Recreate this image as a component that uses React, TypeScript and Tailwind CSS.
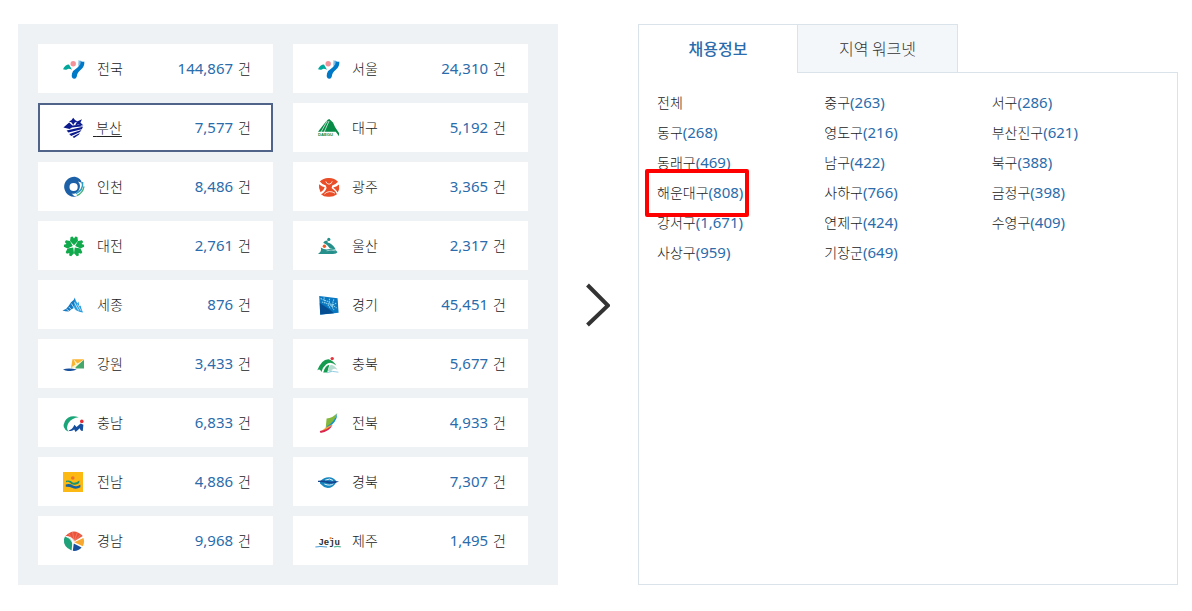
import { useState } from 'react';
import type { ReactNode } from 'react';
import clsx from 'clsx';

type Region = { name: string; count: string; mark: ReactNode };

const seoul = (
  <>
    <path d="M3 14.2Q5 9.4 9 9.4L12 14.8Q8.5 12.9 7 14.4Q5 15 3 14.2Z" fill="#00a89c" />
    <circle cx="13.2" cy="8.8" r="2.7" fill="#f4929a" />
    <path d="M20.2 5.5Q22 7.4 24.3 6.6Q24.8 11.6 20.8 14.8Q17.2 17.4 16.8 21.5Q16.2 24 14 23.8Q11 23 12 18.4Q12.8 15.6 16.3 13.6Q20.4 11 20.2 5.5Z" fill="#0078c8" />
    <path d="M18.6 5L20.8 6.4L20.2 9.6L18.2 11Z" fill="#7db9e4" />
  </>
);
const busan = (
  <g fill="#0b1a8e">
    <path d="M13.2 3.8L15 6L17.6 7.4L14.8 8.6L13.2 11L11.6 8.6L9 7.4L11.4 6.2Z" />
    <path d="M17 7.6L22 5.2L20.4 8.4L23.4 11.4L18 10.4L15 11.8Z" />
    <path d="M3.4 13.4L9.2 8.6L12.4 11.6L20 10.8L22.8 12.2L12 13.6L9.5 15Z" />
    <path d="M6.6 16.6L23 12.8L21.8 15.2L8.4 18.6Z" />
    <path d="M9.2 20L21.4 16L20 18L11.2 22Z" />
    <path d="M12.6 22.8L19.8 19L18.8 20.8L14 24Z" />
  </g>
);
const incheon = (
  <>
    <path d="M15 3.8A10 10 0 1 0 18 23Q14 24 11.6 20.4A6.4 6.4 0 0 0 19.4 16Q21 11 18 8.4Q21 8.6 22 11Q21.5 5 15 3.8Z" fill="#1c60a8" />
    <circle cx="13.6" cy="14" r="4.1" fill="#fff" />
    <path d="M22.6 9Q23.4 17.4 15.8 20.6" fill="none" stroke="#2d9fc5" strokeWidth="1.5" />
    <path d="M24 13.4Q23 20 16.8 22.6" fill="none" stroke="#48ae79" strokeWidth="1.3" />
  </>
);
const daejeon = (
  <g fill="#10a94c">
    {[0, 72, 144, 216, 288].map((angle) => (
      <g key={angle} transform={`rotate(${angle} 14 14.5)`}>
        <path d="M14 13.2L10 9L10.6 5L12.6 4.4L14 6.6L15.4 4.4L17.4 5L18 9Z" />
      </g>
    ))}
  </g>
);
const sejong = (
  <>
    <path d="M2.5 19.6Q6.4 18.4 8.4 15.2L11 11.2Q13.8 9.8 15 6.4Q16 12.6 13.6 17L8.5 20.6Q5.2 20.6 2.5 19.6Z" fill="#1478c2" />
    <path d="M14.8 7.8L17.4 12.6L18.4 10.6L19.4 15.2L20.6 14.4Q21.4 18.4 23 21.4Q17 20.4 13.8 17.4Z" fill="#259be0" />
    <path d="M8.8 16L12.2 19.4M11.4 12.6L15.2 18.8M14.4 11.4L18.8 19.6M17.4 13.4L21 19.8M6.4 18L9 20" stroke="#fff" strokeWidth=".7" />
  </>
);
const gangwon = (
  <>
    <path d="M12.4 9.2H24L20 13.2L11 18.4Z" fill="#fbb332" />
    <path d="M24 9.8V18.4H15.6L15.2 16.6Z" fill="#45a86a" />
    <path d="M13.6 9.2L17.4 13.4L24 9.4L14.8 18L11 17.6L15.6 14.4Z" fill="#fff6cf" />
    <path d="M3 19.4Q9 17.6 16.8 19.6Q13 21.6 8 20.9Q5.4 20.6 3 19.4Z" fill="#174f9c" />
  </>
);
const chungnam = (
  <>
    <path d="M18.8 8.2Q9 5.2 5 12Q1 19.6 8.6 22.8Q5.6 18.8 8.6 13.8Q12 8.8 18.8 8.2Z" fill="#19a577" />
    <path d="M8.4 21.4Q12.4 20.8 14.4 15.8L16.6 18L20.6 14.6L23.4 15.8L22.8 21.8Q20.4 22.8 19.8 19.2L15.6 23L14.2 20.6Q11.6 23 8.4 21.4Z" fill="#164fa0" />
    <circle cx="21.8" cy="12.4" r="1.8" fill="#e62c35" />
  </>
);
const jeonnam = (
  <>
    <path d="M3 4H23V24H3Z" fill="#fcb913" />
    <circle cx="12.8" cy="10" r="1.8" fill="#ee7131" />
    <path d="M6 12.7Q10.6 11.6 12.6 14.4Q15 15.8 19.4 12.5Q20 16 16 16.6Q12 17.4 10 14.8Q8 13.2 6 14.2Z" fill="#1b936b" />
    <path d="M5.8 16.6Q9.5 15.2 13 17.4Q16.6 19.2 20.4 16.8V19.2Q16.6 21.8 12 19.8Q9 18.4 5.8 18.8Z" fill="#1762a2" />
  </>
);
const gyeongnam = (
  <>
    <path d="M5.5 9Q14 0 22.8 9L14.8 14Q11 8.8 5.5 9Z" fill="#ea543d" />
    <path d="M14.2 14.4L8 5.8M14.2 14.4L12.5 4.6M14.2 14.4L17.5 4.8M14.2 14.4L21.4 7" stroke="#f7b09e" strokeWidth=".4" />
    <path d="M5 9.5Q12 10.8 12.3 16.2L11.6 23.6Q3 19.8 4 12Z" fill="#1fa179" />
    <path d="M6 9.5Q12 12 13 17.8" stroke="#fff" fill="none" strokeWidth=".8" />
    <path d="M14.2 15.3L23.4 11Q25 15 22.8 19.2Z" fill="#f7a831" />
    <path d="M13.8 16.5L21.6 20.5Q18 24.5 12.8 23.8Z" fill="#16509d" />
  </>
);
const daegu = (
  <>
    <path d="M3 17.8L11 7.4L12.8 5.8L14.2 5L18 8.4L20 13L24 19V22.2L20.8 17.8Z" fill="#078b46" />
    <path d="M6 18L12.2 7M9.2 18L14 7" stroke="#fff" strokeWidth=".7" fill="none" />
    <text x="3" y="22" fontFamily="Liberation Sans" fontSize="4.2" fontWeight="700" fill="#078b46">DAEGU</text>
  </>
);
const gwangju = (
  <>
    <path d="M4.8 8.6Q8.4 4.8 13.6 5Q19.6 4.8 23 8.8Q21 11.4 17.2 12.4L16.6 15Q20.6 17.6 22 21.2Q18 24 13.8 23.7Q9 24 6 21.2Q10 19.4 11.6 15L10.8 12.6Q7 11.6 4.8 8.6Z" fill="#e94e28" />
    <path d="M4 11.2Q6.8 13.6 9.8 14.2Q9 17.2 5.6 19.2Q3.4 15.2 4 11.2ZM24 11.4Q21.4 13.8 18.2 14.4Q20.8 16.4 22.8 19.4Q25 15.6 24 11.4Z" fill="#e94e28" />
    <path d="M10.8 8.4Q11.4 11 14 11.2Q16.6 11 17.2 8.4" stroke="#fff" strokeWidth=".8" fill="none" />
    <path d="M9.4 21Q14 16.6 20 20.2" stroke="#fff" strokeWidth=".8" fill="none" />
  </>
);
const ulsan = (
  <>
    <circle cx="13.8" cy="7.4" r="1.6" fill="#25908b" />
    <path d="M8.2 10.8Q9.6 8.2 12.6 8.4L12.6 10.4Q17.4 11.4 20.8 17.4L15 16.4Q11.6 12 8.2 10.8Z" fill="#25908b" />
    <path d="M5.8 15.6Q10 18.4 14.8 17Q20 16.4 22.5 20.2Q21.6 21.8 18 21.9H3Q7 19.8 5.8 15.6Z" fill="#25908b" />
    <path d="M11.6 18.8Q16 17.4 20.4 18.8" stroke="#fff" strokeWidth=".5" fill="none" />
    <circle cx="9.4" cy="14.3" r="1.7" fill="#f15a24" />
  </>
);
const gyeonggi = (
  <>
    <path d="M4.2 4.9L22.6 7.2L23.6 21.7L5.2 23.7Z" fill="#0a78c0" />
    <path d="M4.8 12L14 18L19 22.2L5.2 23.6Z" fill="#064e92" />
    <path d="M5.6 7.6L14 11L19 19M9 6.4L10 12L17 13.5L21.5 17M14.5 7.8L14 13L18 15.8M18.8 8.4L17.2 14L21.8 12M7 11L12 12.6L15.5 17.4" fill="none" stroke="#8bd1ed" strokeWidth="1.1" strokeDasharray="1.4 .8" />
  </>
);
const chungbuk = (
  <>
    <path d="M2.2 20.6Q6.8 8.8 13.6 9.2Q17.5 10 21.4 15.4Q15.4 10.6 11 14.4Q7.8 17 6.4 22Q4.8 18 2.2 20.6Z" fill="#159b50" />
    <path d="M8.2 22.4Q10.2 15.4 14.4 14.8L12.2 22.6Z" fill="#159b50" />
    <path d="M13 21Q13.4 16.4 16.2 14.8Q20.6 16 22.6 20Q18 16.5 15.8 22Z" fill="#b5dcd0" />
    <path d="M11.8 22.8Q17 20.2 23.4 22.2" stroke="#77c2de" strokeWidth=".8" fill="none" />
    <circle cx="17.2" cy="8.6" r="1.7" fill="#e8343e" />
  </>
);
const jeonbuk = (
  <>
    <path d="M11.6 9.6Q17.6 8.8 22 4.2Q20 12 15.8 16.4L10.8 18Z" fill="#83b83b" />
    <path d="M22.2 4.2Q22.6 14 10.2 20.4L11 18Q20 12.6 22.2 4.2Z" fill="#168fcd" />
    <path d="M11 18.4L17.4 15.2Q12.6 21 5.6 22.4Z" fill="#f3aa24" />
    <path d="M4.8 22Q12 21.2 17.8 15.6Q14.2 23 5.5 24Z" fill="#dc244e" />
  </>
);
const gyeongbuk = (
  <>
    <path d="M5 13.2Q9.5 8.8 14.2 9.2Q18.2 9.2 21.4 13.2L20.8 15Q17.8 20 12.6 20Q8.4 19.2 5 15.4Z" fill="#1687bf" />
    <path d="M9.4 16Q15 18.4 18.4 15.6M10.2 12.2Q15 9.8 17.8 12.4" stroke="#fff" strokeWidth=".9" fill="none" />
    <path d="M3 12.8Q10 12 14 13.2Q17 14 20 13L24 13.6L20.2 15Q15.8 16.2 12.4 15Q8 13.8 3 14Z" fill="#15458f" />
  </>
);
const jeju = (
  <>
    <text x="3.4" y="18" fontFamily="Liberation Mono" fontSize="9" fontWeight="700" fill="#303030">Jeju</text>
    <circle cx="15.6" cy="11.2" r="1.1" fill="#f29239" />
    <path d="M.4 20Q5 19 12 20" stroke="#4b9bd3" strokeWidth="1.2" fill="none" />
    <path d="M19 20Q22 19 25.8 19.9" stroke="#57b997" strokeWidth="1.2" fill="none" />
  </>
);

const regions: Region[] = [
  { name: '전국', count: '144,867', mark: seoul },
  { name: '서울', count: '24,310', mark: seoul },
  { name: '부산', count: '7,577', mark: busan },
  { name: '대구', count: '5,192', mark: daegu },
  { name: '인천', count: '8,486', mark: incheon },
  { name: '광주', count: '3,365', mark: gwangju },
  { name: '대전', count: '2,761', mark: daejeon },
  { name: '울산', count: '2,317', mark: ulsan },
  { name: '세종', count: '876', mark: sejong },
  { name: '경기', count: '45,451', mark: gyeonggi },
  { name: '강원', count: '3,433', mark: gangwon },
  { name: '충북', count: '5,677', mark: chungbuk },
  { name: '충남', count: '6,833', mark: chungnam },
  { name: '전북', count: '4,933', mark: jeonbuk },
  { name: '전남', count: '4,886', mark: jeonnam },
  { name: '경북', count: '7,307', mark: gyeongbuk },
  { name: '경남', count: '9,968', mark: gyeongnam },
  { name: '제주', count: '1,495', mark: jeju },
];

const districts: [string, string?][] = [
  ['전체'], ['중구', '263'], ['서구', '286'],
  ['동구', '268'], ['영도구', '216'], ['부산진구', '621'],
  ['동래구', '469'], ['남구', '422'], ['북구', '388'],
  ['해운대구', '808'], ['사하구', '766'], ['금정구', '398'],
  ['강서구', '1,671'], ['연제구', '424'], ['수영구', '409'],
  ['사상구', '959'], ['기장군', '649'],
];

const numberStyle = "font-['Noto_Sans','Noto_Sans_CJK_KR',sans-serif] text-[15px] font-normal text-[#2a6cac]";

function RegionCard({ region, selected }: { region: Region; selected: boolean }) {
  return (
    <a
      href="#districts"
      aria-current={selected ? 'true' : undefined}
      className={clsx(
        'flex h-[49px] items-center bg-white px-[22px]',
        selected && 'outline-2 -outline-offset-2 outline-[#50648a]',
      )}
    >
      <svg className="h-[27px] w-7 shrink-0" viewBox="0 0 28 27" aria-hidden="true">{region.mark}</svg>
      <span className="flex flex-1 items-baseline justify-between pb-0.5">
        <span className={clsx('whitespace-pre', selected ? 'pl-[5px] underline underline-offset-3' : 'pl-[9px]')}>
          {selected ? ' ' : ''}{region.name}
        </span>
        <span className="flex items-baseline gap-[5px]">
          <span className={numberStyle}>{region.count}</span>
          <span>건</span>
        </span>
      </span>
    </a>
  );
}

export default function App() {
  const [tab, setTab] = useState(0);
  return (
    <main className="grid grid-cols-[minmax(0,1fr)_80px_minmax(0,1fr)] bg-white pt-6 pr-[14px] pb-6 pl-[18px] font-['Noto_Sans_CJK_KR',sans-serif] text-sm leading-5 font-light text-[#222]">
      <nav aria-label="지역" className="grid grid-cols-2 gap-x-5 gap-y-[10px] bg-[#eef2f5] py-5 pr-[30px] pl-5">
        {regions.map((region) => (
          <RegionCard key={region.name} region={region} selected={region.name === '부산'} />
        ))}
      </nav>

      <div className="flex items-center justify-center">
        <svg className="h-11 w-6" viewBox="0 0 24 44" fill="none" aria-hidden="true">
          <path d="M1.5 2L22 22.5L1.5 42" stroke="#333" strokeWidth="4" />
        </svg>
      </div>

      <section id="districts" className="flex flex-col">
        <div role="tablist" className="flex">
          {['채용정보', '지역 워크넷'].map((label, index) => (
            <button
              key={label}
              type="button"
              role="tab"
              aria-selected={tab === index}
              onClick={() => setTab(index)}
              className={clsx(
                'h-[49px] border-t border-[#dae3e9] pb-0.5 text-base',
                index === 0 ? 'w-[159px] border-l' : 'w-[161px] border-x',
                tab === index ? 'bg-white font-medium text-[#2a6cac]' : 'border-b bg-[#f3f7f9] text-[#333]',
              )}
            >
              {label}
            </button>
          ))}
          <div className="flex-1 border-b border-[#dae3e9]" />
        </div>
        <div className="flex-1 border-x border-b border-[#dae3e9] px-[18px] pt-[14px] pb-4">
          <ul className="grid grid-cols-3">
            {districts.map(([name, count]) => (
              <li key={name} className="flex h-[30px] items-center">
                <a href="#districts" className="relative flex items-baseline">
                  <span>{name}</span>
                  {count && <span className={numberStyle}>({count})</span>}
                  {name === '해운대구' && (
                    <span aria-hidden="true" className="absolute -top-[13px] -right-[6px] -left-3 h-12 rounded-xs border-4 border-[#ff0000]" />
                  )}
                </a>
              </li>
            ))}
          </ul>
        </div>
      </section>
    </main>
  );
}
